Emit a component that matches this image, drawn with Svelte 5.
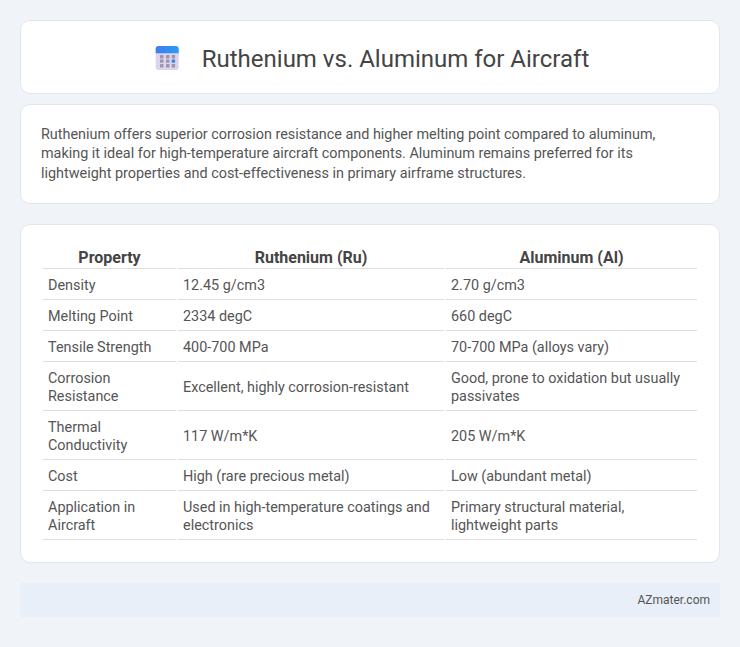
<script>
  const rows = [
    ['Density', '12.45 g/cm3', '2.70 g/cm3'],
    ['Melting Point', '2334 degC', '660 degC'],
    ['Tensile Strength', '400-700 MPa', '70-700 MPa (alloys vary)'],
    ['Corrosion Resistance', 'Excellent, highly corrosion-resistant', 'Good, prone to oxidation but usually passivates'],
    ['Thermal Conductivity', '117 W/m*K', '205 W/m*K'],
    ['Cost', 'High (rare precious metal)', 'Low (abundant metal)'],
    ['Application in Aircraft', 'Used in high-temperature coatings and electronics', 'Primary structural material, lightweight parts']
  ];
</script>

<div class="page">
  <header class="card head">
    <svg class="icon" viewBox="0 0 24 25" width="24" height="25" aria-hidden="true">
      <defs>
        <linearGradient id="top" x1="0" y1="0" x2="1" y2="0">
          <stop offset="0" stop-color="#3f7df0" />
          <stop offset="1" stop-color="#2a9df4" />
        </linearGradient>
      </defs>
      <rect x="0.7" y="1" width="23" height="24" rx="3" fill="#ddd3ea" />
      <path d="M.7 8.3V4a3 3 0 0 1 3-3h17a3 3 0 0 1 3 3v4.300z" fill="url(#top)" />
      <g fill="#9d97ad">
        <rect x="5" y="10" width="3.400" height="3.400" rx=".4" /><rect x="11" y="10" width="3.400" height="3.400" rx=".4" /><rect x="16.700" y="10" width="3.400" height="3.400" rx=".4" />
        <rect x="5" y="14.400" width="3.400" height="3.400" rx=".4" /><rect x="11" y="14.400" width="3.400" height="3.400" rx=".4" />
        <rect x="5" y="19" width="3.400" height="3.400" rx=".4" /><rect x="11" y="19" width="3.400" height="3.400" rx=".4" /><rect x="16.700" y="19" width="3.400" height="3.400" rx=".4" />
      </g>
      <rect x="16.700" y="14.400" width="3.400" height="3.400" rx=".4" fill="#2a8df0" />
    </svg>
    <h1>Ruthenium vs. Aluminum for Aircraft</h1>
  </header>

  <section class="card intro">
    <p>Ruthenium offers superior corrosion resistance and higher melting point compared to aluminum, making it ideal for high-temperature aircraft components. Aluminum remains preferred for its lightweight properties and cost-effectiveness in primary airframe structures.</p>
  </section>

  <section class="card tablecard">
    <table>
      <thead>
        <tr><th class="c1">Property</th><th class="c2">Ruthenium (Ru)</th><th>Aluminum (Al)</th></tr>
      </thead>
      <tbody>
        {#each rows as r}
          <tr><td>{r[0]}</td><td>{r[1]}</td><td>{r[2]}</td></tr>
        {/each}
      </tbody>
    </table>
  </section>

  <footer>AZmater.com</footer>
</div>

<style>
  :global(body) {
    margin: 0;
    background: #f0f4f9;
    font-family: Roboto, sans-serif;
    color: #555;
  }
  .page {
    padding: 20px;
    display: flex;
    flex-direction: column;
  }
  .card {
    background: #fff;
    border: 1px solid #e2e6ef;
    border-radius: 10px;
    box-sizing: border-box;
  }
  .head {
    height: 74px;
    display: flex;
    align-items: center;
    justify-content: center;
    gap: 23px;
    padding-top: 3px;
    padding-left: 4px;
    margin-bottom: 10px;
  }
  .icon { flex: none; margin-top: -2px; }
  h1 {
    margin: 0;
    font-size: 24px;
    font-weight: 400;
    color: #444;
  }
  .intro {
    padding: 20px;
    margin-bottom: 20px;
  }
  .intro p {
    margin: 0;
    font-size: 14.4px;
    line-height: 19.44px;
  }
  .tablecard {
    padding: 20px;
    margin-bottom: 20px;
  }
  table {
    width: 100%;
    border-collapse: separate;
    border-spacing: 2px;
    font-size: 14.4px;
    line-height: 18px;
  }
  th {
    font-size: 16px;
    line-height: 20px;
    font-weight: 700;
    color: #444;
    padding: 1px 6px 0;
    text-align: center;
    border-bottom: 1px solid #ddd;
  }
  .c1 { width: 121px; }
  .c2 { width: 254px; }
  td {
    padding: 6px 5px 4px;
    text-align: left;
    border-bottom: 1px solid #ddd;
  }
  footer {
    height: 34px;
    background: #e8eff8;
    display: flex;
    align-items: center;
    justify-content: flex-end;
    padding-right: 10px;
    font-size: 12px;
  }
</style>
